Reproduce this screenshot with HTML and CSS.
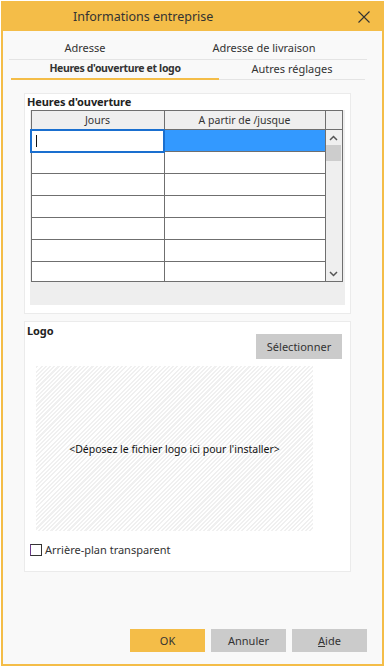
FILE: index.html
```html
<!DOCTYPE html>
<html lang="fr">
<head>
    <meta charset="UTF-8">
    <meta name="viewport" content="width=device-width, initial-scale=1.0">
    <title>Informations entreprise</title>
    <link rel="stylesheet" href="styles.css">
</head>
<body>
    <div class="window">
        <div class="title-bar">
            <span class="title">Informations entreprise</span>
            <button class="close-btn" aria-label="Fermer">
                <svg width="12" height="12" viewBox="0 0 12 12">
                    <path d="M0.5 0.5 L11.5 11.5 M11.5 0.5 L0.5 11.5" stroke="#333" stroke-width="1.1" fill="none"/>
                </svg>
            </button>
        </div>

        <div class="content">
            <div class="tab-row first">
                <div class="tab lead">Adresse</div>
                <div class="tab">Adresse de livraison</div>
            </div>
            <div class="tab-row second">
                <div class="tab lead active">Heures d'ouverture et logo</div>
                <div class="tab">Autres réglages</div>
            </div>

            <div class="panel hours-panel">
                <div class="panel-title">Heures d'ouverture</div>
                <div class="grid-wrap">
                    <table class="hours-grid">
                        <thead>
                            <tr>
                                <th class="col-days">Jours</th>
                                <th class="col-time">A partir de /jusque</th>
                                <th class="col-scroll"></th>
                            </tr>
                        </thead>
                        <tbody>
                            <tr class="selected">
                                <td class="editing"><span class="caret"></span></td>
                                <td class="highlight"></td>
                                <td class="scrollbar" rowspan="7">
                                    <div class="scroll-inner">
                                        <svg class="arrow" width="9" height="6" viewBox="0 0 9 6">
                                            <path d="M1 5 L4.5 1.5 L8 5" stroke="#555" stroke-width="1.5" fill="none"/>
                                        </svg>
                                        <div class="thumb"></div>
                                        <div class="track"></div>
                                        <svg class="arrow" width="9" height="6" viewBox="0 0 9 6">
                                            <path d="M1 1 L4.5 4.5 L8 1" stroke="#555" stroke-width="1.5" fill="none"/>
                                        </svg>
                                    </div>
                                </td>
                            </tr>
                            <tr><td></td><td></td></tr>
                            <tr><td></td><td></td></tr>
                            <tr><td></td><td></td></tr>
                            <tr><td></td><td></td></tr>
                            <tr><td></td><td></td></tr>
                            <tr class="last"><td></td><td></td></tr>
                        </tbody>
                    </table>
                    <div class="grid-footer"></div>
                </div>
            </div>

            <div class="panel logo-panel">
                <div class="panel-title">Logo</div>
                <div class="select-row">
                    <button class="gray-btn">Sélectionner</button>
                </div>
                <div class="drop-zone">&lt;Déposez le fichier logo ici pour l'installer&gt;</div>
                <label class="check-row">
                    <span class="checkbox"></span>
                    Arrière-plan transparent
                </label>
            </div>

            <div class="footer">
                <button class="btn primary">OK</button>
                <button class="btn">Annuler</button>
                <button class="btn"><u>A</u>ide</button>
            </div>
        </div>
    </div>
</body>
</html>
```

FILE: styles.css
```css
* {
    box-sizing: border-box;
}
body {
    margin: 0;
    background-color: #ffffff;
    font-family: "Noto Sans", "Open Sans", sans-serif;
    color: #222;
}
.window {
    margin: 1px 0 0 1px;
    width: 383px;
    height: 665px;
    border: 2px solid #f4bd48;
    border-top: none;
    background-color: #f9f9f9;
    display: flex;
    flex-direction: column;
}
.title-bar {
    height: 30px;
    background-color: #f4bd48;
    display: flex;
    align-items: center;
    padding-left: 70px;
    padding-right: 12px;
}
.title {
    flex: 1;
    font-size: 12.5px;
    color: #333;
}
.close-btn {
    background: none;
    border: none;
    padding: 0;
    width: 12px;
    height: 12px;
    display: flex;
    margin-top: 1px;
}
.content {
    flex: 1;
    display: flex;
    flex-direction: column;
}
.tab-row {
    display: flex;
    font-size: 11px;
    color: #333;
}
.tab {
    flex: 1;
    text-align: center;
}
.tab-row.first {
    margin: 0 15px 0 6px;
    height: 29px;
    padding-top: 6px;
    border-bottom: 1px solid #e4e4e4;
}
.tab-row.first .tab {
    line-height: 22px;
}
.tab-row.first .tab.lead {
    flex: 0 0 152px;
}
.tab-row.second {
    margin: 0 17px 0 8px;
    height: 20px;
}
.tab-row.second .tab {
    line-height: 18px;
    border-bottom: 1px solid #e4e4e4;
    height: 20px;
}
.tab-row.second .tab.lead {
    flex: 0 0 208px;
}
.tab-row.second .tab.active {
    font-weight: bold;
    font-size: 10.5px;
    letter-spacing: -0.35px;
    border-bottom: 2px solid #f4bd48;
    line-height: 17px;
}
.panel {
    background-color: #ffffff;
    border: 1px solid #ebebeb;
    margin-left: 21px;
    width: 327px;
}
.panel-title {
    font-size: 11px;
    font-weight: bold;
    color: #222;
    line-height: 14px;
    letter-spacing: -0.1px;
}
.hours-panel {
    margin-top: 13px;
    padding: 1px 6px 6px 5px;
    height: 221px;
}
.hours-panel .panel-title {
    margin-left: -3px;
}
.grid-wrap {
    margin-top: 1px;
    background-color: #eeeeee;
    width: 315px;
}
.hours-grid {
    border-collapse: collapse;
    table-layout: fixed;
    width: 313px;
    font-size: 10.5px;
}
.hours-grid th,
.hours-grid td {
    border: 1px solid #6f6f6f;
    padding: 0;
}
.hours-grid th {
    height: 19px;
    background-color: #efefef;
    font-weight: normal;
    color: #333;
    text-align: center;
}
.col-days {
    width: 133px;
}
.col-time {
    width: 161px;
}
.hours-grid td {
    height: 22px;
    background-color: #ffffff;
}
.hours-grid tr.last td {
    height: 20px;
}
.hours-grid td.editing {
    border: 2px solid #1a6fcf;
    padding-left: 4px;
}
.caret {
    display: block;
    width: 1px;
    height: 12px;
    background-color: #111;
}
.hours-grid td.highlight {
    background-color: #3399ff;
}
.hours-grid td.scrollbar {
    background-color: #efefef;
    vertical-align: top;
    padding: 0;
}
.scroll-inner {
    display: flex;
    flex-direction: column;
    align-items: center;
    height: 150px;
    padding: 5px 1px 3px;
}
.thumb {
    margin-top: 4px;
    width: 15px;
    height: 16px;
    background-color: #cdcdcd;
}
.track {
    flex: 1;
}
.grid-footer {
    height: 23px;
}
.logo-panel {
    margin-top: 7px;
    height: 251px;
    padding: 2px 8px 0 2px;
    display: flex;
    flex-direction: column;
}
.select-row {
    display: flex;
    justify-content: flex-end;
    margin-top: -4px;
}
.gray-btn {
    width: 86px;
    height: 25px;
    border: none;
    background-color: #cbcbcb;
    font-family: inherit;
    font-size: 11px;
    color: #333;
}
.drop-zone {
    margin: 7px 0 0 9px;
    width: 277px;
    height: 165px;
    display: flex;
    align-items: center;
    justify-content: center;
    font-size: 10.5px;
    color: #111;
    background: repeating-linear-gradient(-45deg, #ffffff 0, #ffffff 1.5px, #f0f0f0 1.5px, #f0f0f0 3px);
}
.check-row {
    display: flex;
    align-items: center;
    gap: 3px;
    margin: 11px 0 0 3px;
    font-size: 11px;
    color: #333;
}
.checkbox {
    width: 12px;
    height: 12px;
    border: 1px solid #333;
    border-left-color: #6a3a8a;
    background-color: #fff;
}
.footer {
    margin-top: auto;
    display: flex;
    justify-content: flex-end;
    gap: 6px;
    padding: 0 15px 12px 0;
}
.btn {
    width: 75px;
    height: 23px;
    border: none;
    background-color: #cbcbcb;
    font-family: inherit;
    font-size: 11px;
    color: #333;
}
.btn.primary {
    background-color: #f4bd48;
}
```
